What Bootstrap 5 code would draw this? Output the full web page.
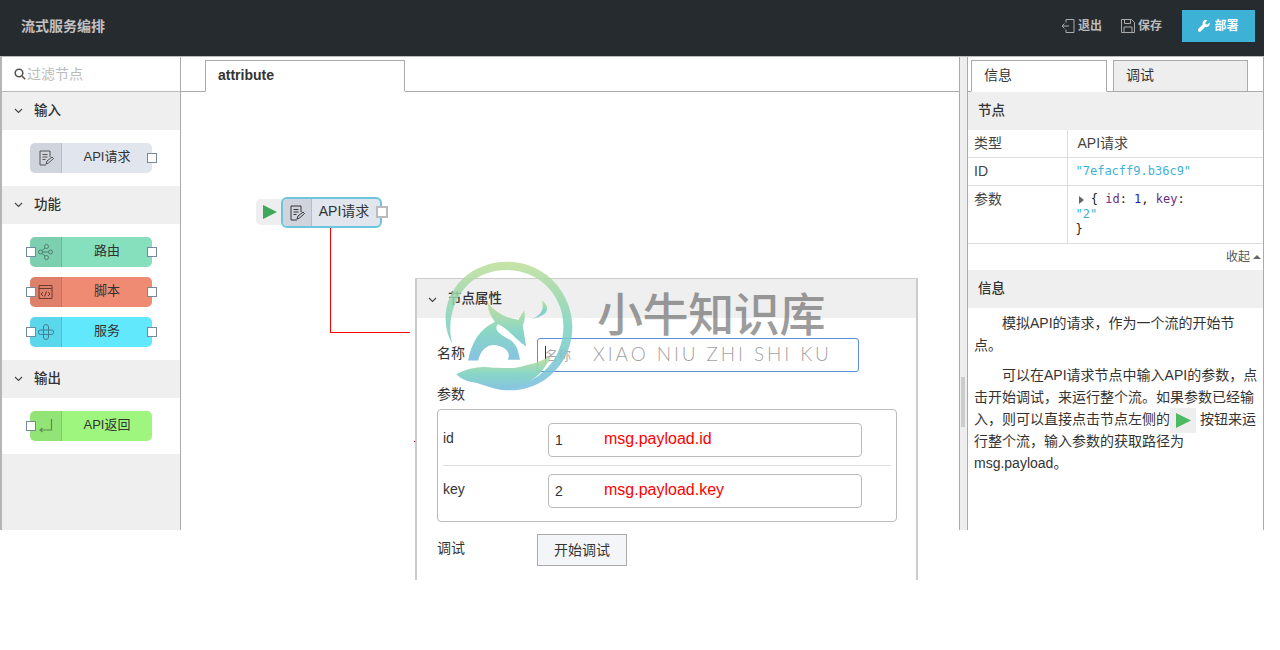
<!DOCTYPE html>
<html lang="zh-CN">
<head>
  <meta charset="UTF-8">
  <meta name="viewport" content="width=device-width, initial-scale=1">
  <title>流式服务编排</title>
  <link href="https://cdn.jsdelivr.net/npm/bootstrap@5.3.3/dist/css/bootstrap.min.css" rel="stylesheet">

  <style>
    body {
      background-color: #fff;
      color: #333;
      font-family: "Liberation Sans", "Noto Sans CJK SC", sans-serif;
      font-size: 14px;
      min-height: 650px;
    }

    .app-shell {
      width: 1264px;
      height: 530px;
      position: relative;
    }

    /* header */
    .top-bar {
      height: 57px;
      background-color: #262b30;
      border-bottom: 1px solid #bbb;
      padding: 10px 9px 14px 21px;
    }

    .top-title {
      color: #c0c0c0;
      font-weight: 600;
      font-size: 14px;
    }

    .top-link {
      color: #bbb;
      font-size: 12px;
      font-weight: 600;
      gap: 3px;
    }

    .top-link-first {
      margin-right: 19px;
    }

    .btn-deploy {
      background-color: #3eb1d6;
      color: #fff;
      width: 73px;
      height: 32px;
      border: 0;
      border-radius: 0;
      font-size: 12px;
      font-weight: 600;
      margin-left: 20px;
      padding: 0;
    }

    .btn-deploy:hover {
      background-color: #3eb1d6;
      color: #fff;
    }

    .main-row {
      height: 473px;
      border-left: 2px solid #b5b5b5;
      border-right: 1px solid #aaa;
    }

    /* palette */
    .palette {
      width: 179px;
      background-color: #efefef;
      border-right: 1px solid #aaa;
      flex: none;
    }

    .palette-search {
      height: 35px;
      background-color: #fff;
      border-bottom: 1px solid #bbb;
      padding-left: 12px;
      gap: 1px;
      color: #bbb;
      font-size: 14px;
    }

    .group-head {
      height: 38px;
      background-color: #efefef;
      font-weight: 500;
      font-size: 13.5px;
      color: #333;
      padding-left: 12px;
      gap: 11px;
    }

    .group-body {
      background-color: #fff;
      padding: 13px 0 13px 28px;
      gap: 10px;
    }

    .flow-node {
      width: 122px;
      height: 30px;
      border-radius: 5px;
      position: relative;
      font-size: 13px;
      color: #333;
    }

    .node-icon {
      width: 32px;
      flex: none;
      background-color: rgba(0, 0, 0, .07);
      border-right: 1px solid rgba(0, 0, 0, .12);
      border-radius: 5px 0 0 5px;
    }

    .node-icon-slim {
      width: 29px;
    }

    .node-label {
      flex: 1;
      text-align: center;
      padding-bottom: 2px;
    }

    .node-port {
      position: absolute;
      width: 10px;
      height: 10px;
      top: 10px;
      background-color: #fff;
      border: 1px solid #778899;
    }

    .port-in { left: -4px; }
    .port-out { right: -5px; }

    .tone-api { background-color: #e0e5ee; }
    .tone-route { background-color: #87e0bd; }
    .tone-script { background-color: #ef8a73; }
    .tone-service { background-color: #62e8fd; }
    .tone-return { background-color: #9ff67f; }

    /* workspace */
    .workspace {
      width: 778px;
      flex: none;
      position: relative;
      background-color: #fff;
    }

    .tab-strip {
      height: 35px;
      border-bottom: 1px solid #aaa;
      padding-left: 24px;
      align-items: flex-end;
    }

    .tab-strip .nav-link {
      height: 32px;
      margin-bottom: -1px;
      padding: 4px 12px;
      border: 1px solid #aaa;
      border-radius: 0;
      color: #333;
      font-size: 14px;
      line-height: 20px;
    }

    .tab-strip .nav-link.active {
      border-bottom-color: #fff;
      background-color: #fff;
      color: #333;
    }

    .tab-attr { width: 200px; font-weight: 700; }

    .canvas-wires {
      position: absolute;
      left: 0;
      top: 0;
    }

    .run-btn {
      position: absolute;
      left: 75px;
      top: 142px;
      width: 30px;
      height: 26px;
      background-color: #eee;
      border-radius: 5px;
      padding: 6px 0 0 7px;
    }

    .canvas-node {
      position: absolute;
      left: 100px;
      top: 140px;
      width: 101px;
      height: 31px;
      border: 2px solid #6cc5dc;
      border-radius: 6px;
    }

    .canvas-node .node-label {
      padding-right: 4px;
    }

    .canvas-node .node-port {
      right: -8px;
      top: 7px;
      width: 12px;
      height: 12px;
      border: 2px solid #bbb;
    }

    .prop-panel {
      position: absolute;
      left: 234px;
      top: 221px;
      width: 503px;
      height: 302px;
      background-color: #fff;
      border-left: 2px solid #ccc;
      border-right: 2px solid #ccc;
      border-top: 1px solid #ccc;
    }

    .prop-head {
      height: 39px;
      background-color: #efefef;
      font-size: 13.5px;
      font-weight: 500;
      padding: 2px 0 0 11px;
      gap: 11px;
    }

    .prop-body {
      padding: 20px 19px 0 20px;
    }

    .prop-label {
      width: 100px;
      flex: none;
      padding-bottom: 4px;
    }

    .field-name {
      width: 322px;
      height: 34px;
      border: 1px solid #5b8fd6;
      border-radius: 3px;
      padding: 0 7px;
      font-size: 13px;
      box-shadow: none;
    }

    .field-name::placeholder {
      color: #aaa;
    }

    .param-box {
      width: 460px;
      height: 113px;
      border: 1px solid #bbb;
      border-radius: 4px;
      padding: 13px 5px 0;
      margin-top: 4px;
    }

    .param-key {
      width: 105px;
      flex: none;
      padding-bottom: 4px;
    }

    .param-row {
      height: 34px;
      position: relative;
    }

    .field-param {
      width: 314px;
      height: 34px;
      border: 1px solid #bbb;
      border-radius: 4px;
      padding: 0 6px;
      font-size: 14px;
      color: #333;
    }

    .param-note {
      position: absolute;
      left: 161px;
      top: 4px;
      color: #f00;
      font-size: 16px;
    }

    .param-line {
      border-top: 1px solid #ddd;
      margin: 8px 0;
    }

    .btn-debug {
      width: 90px;
      height: 32px;
      padding: 0;
      font-size: 14px;
      color: #333;
      background-color: #f4f5f8;
      border: 1px solid #aaa;
      border-radius: 0;
    }

    .name-caret {
      position: absolute;
      left: 128px;
      top: 67px;
      width: 1px;
      height: 17px;
      background-color: #333;
    }

    /* splitter */
    .splitter {
      width: 9px;
      flex: none;
      background-color: #eee;
      border-left: 1px solid #aaa;
      border-right: 1px solid #aaa;
    }

    .splitter-grip {
      width: 4px;
      height: 50px;
      background-color: #ccc;
      margin: 320px 0 0 1px;
    }

    /* right sidebar */
    .side-panel {
      flex: 1;
      min-width: 0;
      background-color: #fff;
    }

    .side-tabs {
      padding-left: 3px;
      gap: 6px;
      height: 35px;
    }

    .side-tabs .nav-link {
      width: 135px;
      padding-left: 12px;
    }

    .side-tabs .nav-link.active {
      width: 136px;
    }

    .side-tabs .nav-link:not(.active) {
      background-color: #eee;
    }

    .side-head {
      height: 38px;
      background-color: #efefef;
      font-weight: 500;
      font-size: 13.5px;
      padding-left: 10px;
    }

    .meta-table {
      margin: 0;
      font-size: 14px;
      color: #444;
      --bs-table-color: #444;
      --bs-table-border-color: #ddd;
    }

    .meta-table td {
      padding: 3px 6px 4px;
      line-height: 20px;
      border-color: #ddd;
    }

    .meta-table td:first-child {
      width: 99px;
      border-right: 1px solid #ddd;
    }

    .meta-table td:last-child {
      padding-left: 10px;
    }

    .meta-table td.json-text {
      font-family: "DejaVu Sans Mono", "Liberation Mono", monospace;
      font-size: 12px;
      padding-left: 8px;
      color: #222;
      word-break: break-word;
    }

    .meta-table td.json-block {
      line-height: 15px;
      padding-top: 6px;
      padding-bottom: 6px;
    }

    .json-arrow {
      margin-left: 3px;
    }

    .json-str { color: #3eb1d6; }
    .json-key { color: #6b2d83; }
    .json-num { color: #1c1ca8; }

    .collapse-row {
      height: 26px;
      font-size: 12px;
      color: #555;
      padding-right: 2px;
      gap: 3px;
    }

    .info-text {
      padding: 4px 4px 0 6px;
      font-size: 14px;
      line-height: 22px;
      color: #333;
    }

    .info-text p {
      margin-bottom: 8px;
      text-indent: 2em;
    }

    .inline-run {
      display: inline-flex;
      align-items: center;
      justify-content: center;
      width: 26px;
      height: 25px;
      background-color: #eee;
      margin: -3px 4px -3px 0;
      text-indent: 0;
      vertical-align: middle;
    }

    /* watermark */
    .wm-logo {
      position: absolute;
      left: 443px;
      top: 260px;
      opacity: .9;
      pointer-events: none;
    }

    .wm-title {
      position: absolute;
      left: 597px;
      top: 281px;
      font-family: "Noto Sans CJK SC", sans-serif;
      font-weight: 500;
      font-size: 46px;
      line-height: 60px;
      letter-spacing: -.4px;
      color: rgba(90, 90, 90, .6);
      pointer-events: none;
    }

    .wm-sub {
      position: absolute;
      left: 593px;
      top: 342px;
      font-family: "Lato", sans-serif;
      font-weight: 300;
      font-size: 19px;
      line-height: 24px;
      letter-spacing: 2.9px;
      white-space: nowrap;
      color: rgba(90, 90, 90, .6);
      pointer-events: none;
    }
  </style>
</head>
<body>

<div class="app-shell">

  <!-- Header -->
  <nav class="top-bar d-flex align-items-center justify-content-between">
    <span class="top-title">流式服务编排</span>
    <div class="d-flex align-items-center">
      <span class="top-link top-link-first d-flex align-items-center">
        <svg width="14" height="14" viewBox="0 0 14 14" fill="none" stroke="#aaa" stroke-width="1"><path d="M5 3.5V.5h8v13H5v-3M8 7H1M3.5 4.5L1 7l2.5 2.5"/></svg>
        退出
      </span>
      <span class="top-link d-flex align-items-center">
        <svg width="14" height="14" viewBox="0 0 14 14" fill="none" stroke="#aaa" stroke-width="1"><path d="M.5.5h10l3 3v10H.5zM3.5.5v4h6v-4M3 13.5V8h8v5.5"/></svg>
        保存
      </span>
      <button class="btn btn-deploy d-flex align-items-center justify-content-center gap-1" type="button">
        <svg width="12" height="12" viewBox="0 0 12 12" fill="#fff"><path d="M11.6 2.6L9.5 4.6 7.7 4.2 7.3 2.4 9.3.4C7.8-.3 6 .1 5.2 1.2 4.5 2.2 4.4 3.3 4.8 4.4L.4 8.8c-.6.7-.6 1.7 0 2.4.7.7 1.8.7 2.5 0l4.4-4.4c1.1.4 2.4.2 3.4-.6 1-1 1.3-2.3.9-3.6z"/></svg>
        部署
      </button>
    </div>
  </nav>

  <div class="main-row d-flex">

    <!-- Palette -->
    <aside class="palette">
      <div class="palette-search d-flex align-items-center">
        <svg width="12" height="12" viewBox="0 0 12 12" fill="none" stroke="#555" stroke-width="1.6"><circle cx="5" cy="5" r="3.8"/><path d="M8 8l3.2 3.2"/></svg>
        过滤节点
      </div>

      <div class="group-head d-flex align-items-center">
        <svg width="9" height="6" viewBox="0 0 9 6" fill="none" stroke="#444" stroke-width="1.1"><path d="M1 1l3.5 3.5L8 1"/></svg>
        输入
      </div>
      <div class="group-body d-flex flex-column">
        <div class="flow-node tone-api d-flex align-items-stretch">
          <div class="node-icon d-flex align-items-center justify-content-center">
            <svg width="16" height="16" viewBox="0 0 16 16" fill="none" stroke="#555" stroke-width="1"><path d="M12 7V1H2v14h6M4.5 4.5h5M4.5 7h5M4.5 9.5h3M8 14l1-3 5-4 1.5 1.5-5 4.5z"/></svg>
          </div>
          <div class="node-label align-self-center">API请求</div>
          <span class="node-port port-out"></span>
        </div>
      </div>

      <div class="group-head d-flex align-items-center">
        <svg width="9" height="6" viewBox="0 0 9 6" fill="none" stroke="#444" stroke-width="1.1"><path d="M1 1l3.5 3.5L8 1"/></svg>
        功能
      </div>
      <div class="group-body d-flex flex-column">
        <div class="flow-node tone-route d-flex align-items-stretch">
          <div class="node-icon d-flex align-items-center justify-content-center">
            <svg width="15" height="16" viewBox="0 0 15 16" fill="none" stroke="#4f7f70" stroke-width="1"><circle cx="2.5" cy="8" r="2"/><circle cx="8.5" cy="2.5" r="2"/><circle cx="8.5" cy="13.5" r="2"/><circle cx="12.5" cy="8" r="2"/><path d="M4 6.500l3-2.500M4 9.500l3 2.500M4.500 8h6"/></svg>
          </div>
          <div class="node-label align-self-center">路由</div>
          <span class="node-port port-in"></span>
          <span class="node-port port-out"></span>
        </div>
        <div class="flow-node tone-script d-flex align-items-stretch">
          <div class="node-icon d-flex align-items-center justify-content-center">
            <svg width="15" height="16" viewBox="0 0 15 16" fill="none" stroke="#6b3a30" stroke-width="1"><path d="M1 1.5h13v13H1zM1 4.5h13M5 8L3 10l2 2M10 8l2 2-2 2M8.5 7.5l-2 5"/></svg>
          </div>
          <div class="node-label align-self-center">脚本</div>
          <span class="node-port port-in"></span>
          <span class="node-port port-out"></span>
        </div>
        <div class="flow-node tone-service d-flex align-items-stretch">
          <div class="node-icon d-flex align-items-center justify-content-center">
            <svg width="16" height="16" viewBox="0 0 16 16" fill="none" stroke="#3f7f90" stroke-width="1"><path d="M5.5 6V3a2.5 2.5 0 0 1 5 0v3h3a2 2 0 0 1 0 4.5h-3V13a2.5 2.5 0 0 1-5 0v-2.500h-3a2 2 0 0 1 0-4.500zM5.500 6h5v4.500h-5z"/></svg>
          </div>
          <div class="node-label align-self-center">服务</div>
          <span class="node-port port-in"></span>
          <span class="node-port port-out"></span>
        </div>
      </div>

      <div class="group-head d-flex align-items-center">
        <svg width="9" height="6" viewBox="0 0 9 6" fill="none" stroke="#444" stroke-width="1.1"><path d="M1 1l3.5 3.5L8 1"/></svg>
        输出
      </div>
      <div class="group-body d-flex flex-column">
        <div class="flow-node tone-return d-flex align-items-stretch">
          <div class="node-icon d-flex align-items-center justify-content-center">
            <svg width="15" height="16" viewBox="0 0 15 16" fill="none" stroke="#5f8a50" stroke-width="1.2"><path d="M13.5 1v11H2M4.5 10L2 12l2.5 2"/></svg>
          </div>
          <div class="node-label align-self-center">API返回</div>
          <span class="node-port port-in"></span>
        </div>
      </div>
    </aside>

    <!-- Workspace -->
    <section class="workspace">
      <ul class="nav tab-strip">
        <li class="nav-item"><a class="nav-link active tab-attr" href="#">attribute</a></li>
      </ul>

      <svg class="canvas-wires" width="778" height="473" fill="none" stroke="#f00" stroke-width="1" shape-rendering="crispEdges"><path d="M149.5 170V275.5H229M233 384.5h2"/></svg>

      <div class="run-btn">
        <svg class="d-block" width="14" height="14" viewBox="0 0 14 14"><path d="M0 0l14 7-14 7z" fill="#3fa75a"/></svg>
      </div>
      <div class="canvas-node tone-api d-flex align-items-stretch">
        <div class="node-icon node-icon-slim d-flex align-items-center justify-content-center">
          <svg width="16" height="16" viewBox="0 0 16 16" fill="none" stroke="#333" stroke-width="1"><path d="M12 7V1H2v14h6M4.5 4.5h5M4.5 7h5M4.5 9.5h3M8 14l1-3 5-4 1.5 1.5-5 4.5z"/></svg>
        </div>
        <div class="node-label align-self-center">API请求</div>
        <span class="node-port"></span>
      </div>

      <!-- Node properties -->
      <div class="prop-panel">
        <div class="prop-head d-flex align-items-center">
          <svg width="9" height="6" viewBox="0 0 9 6" fill="none" stroke="#444" stroke-width="1.1"><path d="M1 1l3.5 3.5L8 1"/></svg>
          节点属性
        </div>
        <div class="prop-body">
          <div class="d-flex align-items-center">
            <span class="prop-label">名称</span>
            <input class="form-control field-name" type="text" placeholder="名称">
          </div>
          <div class="mt-2 pt-1">参数</div>
          <div class="param-box">
            <div class="param-row d-flex align-items-center">
              <span class="param-key">id</span>
              <input class="form-control field-param" type="text" value="1">
              <span class="param-note">msg.payload.id</span>
            </div>
            <div class="param-line"></div>
            <div class="param-row d-flex align-items-center">
              <span class="param-key">key</span>
              <input class="form-control field-param" type="text" value="2">
              <span class="param-note">msg.payload.key</span>
            </div>
          </div>
          <div class="d-flex align-items-center mt-2 pt-1">
            <span class="prop-label">调试</span>
            <button class="btn btn-debug" type="button">开始调试</button>
          </div>
        </div>
        <span class="name-caret"></span>
      </div>
    </section>

    <div class="splitter"><div class="splitter-grip"></div></div>

    <!-- Info sidebar -->
    <aside class="side-panel">
      <ul class="nav tab-strip side-tabs">
        <li class="nav-item"><a class="nav-link active" href="#">信息</a></li>
        <li class="nav-item"><a class="nav-link" href="#">调试</a></li>
      </ul>
      <div class="side-head d-flex align-items-center">节点</div>
      <table class="table meta-table">
        <tbody>
          <tr><td>类型</td><td>API请求</td></tr>
          <tr><td>ID</td><td class="json-text"><span class="json-str">"7efacff9.b36c9"</span></td></tr>
          <tr>
            <td>参数</td>
            <td class="json-text json-block">
              <svg class="json-arrow" width="5" height="8" viewBox="0 0 5 8"><path d="M0 0l5 4-5 4z" fill="#666"/></svg>
              { <span class="json-key">id</span>: <span class="json-num">1</span>, <span class="json-key">key</span>:<br>
              <span class="json-str">"2"</span><br>
              }
            </td>
          </tr>
        </tbody>
      </table>
      <div class="collapse-row d-flex align-items-center justify-content-end">
        收起
        <svg width="8" height="4" viewBox="0 0 8 4"><path d="M4 0l4 4H0z" fill="#666"/></svg>
      </div>
      <div class="side-head d-flex align-items-center">信息</div>
      <div class="info-text">
        <p>模拟API的请求，作为一个流的开始节点。</p>
        <p>可以在API请求节点中输入API的参数，点击开始调试，来运行整个流。如果参数已经输入，则可以直接点击节点左侧的<span class="inline-run"><svg width="15" height="15" viewBox="0 0 14 14"><path d="M0 0l14 7-14 7z" fill="#4cb963"/></svg></span>按钮来运行整个流，输入参数的获取路径为msg.payload。</p>
      </div>
    </aside>
  </div>

  <!-- Watermark -->
  <svg class="wm-logo" width="134" height="134" viewBox="100 30 400 400">
    <defs>
      <linearGradient id="wmFill" x1="0" y1="0" x2="0" y2="1">
        <stop offset="0" stop-color="#bfdf97"/>
        <stop offset=".5" stop-color="#7dd2c0"/>
        <stop offset="1" stop-color="#79bde0"/>
      </linearGradient>
    </defs>
    <g fill="url(#wmFill)">
      <path d="M128 280C95 225 100 140 160 85 230 20 340 20 410 75 490 140 510 250 455 335 405 410 320 432 250 412 300 420 380 400 430 330 480 250 465 150 395 95 330 45 235 50 178 100 125 150 112 225 128 280z" opacity=".95"/>
      <path d="M175 330C185 275 210 235 255 215 240 195 232 175 235 158 255 185 290 205 325 208L342 180C346 195 345 210 338 225L348 288C320 270 300 240 265 222 250 235 265 250 300 268 325 285 325 310 330 328L293 328C305 305 285 290 262 285 240 280 215 290 205 330z"/>
      <path d="M355 210C385 200 405 185 395 150 420 170 415 190 385 200z"/>
      <path d="M140 370C175 352 215 345 250 352 285 350 310 358 345 345 390 335 400 325 420 320 400 370 350 410 290 418 250 418 220 400 190 395 165 390 150 382 140 370z"/>
    </g>
  </svg>
  <div class="wm-title">小牛知识库</div>
  <div class="wm-sub">XIAO NIU ZHI SHI KU</div>

</div>

<script src="https://cdn.jsdelivr.net/npm/bootstrap@5.3.3/dist/js/bootstrap.bundle.min.js"></script>
</body>
</html>
